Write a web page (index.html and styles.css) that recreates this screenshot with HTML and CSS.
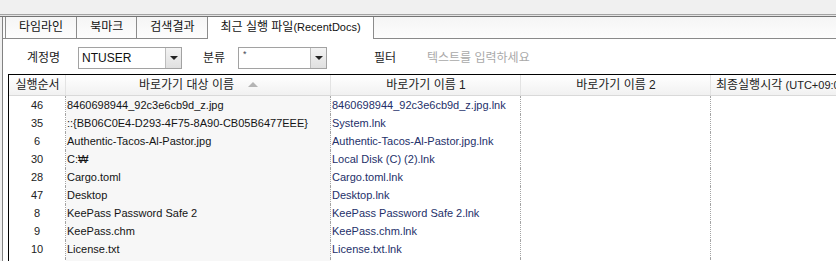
FILE: index.html
```html
<!DOCTYPE html>
<html lang="ko">
  <head>
    <meta charset="UTF-8" />
    <title>최근 실행 파일(RecentDocs)</title>
    <link rel="stylesheet" href="styles.css">
  </head>
  <body>
    <div class="topbar"></div>
    <div class="split"></div>
    <div class="panel">
      <div class="tabs">
        <div class="tab">타임라인</div>
        <div class="tab">북마크</div>
        <div class="tab">검색결과</div>
        <div class="tab active">최근 실행 파일<span class="en">(RecentDocs)</span></div>
      </div>

      <div class="filters">
        <span class="label label-account">계정명</span>
        <div class="combo combo-account">
          <span class="value">NTUSER</span>
          <span class="arrow"></span>
        </div>
        <span class="label label-kind">분류</span>
        <div class="combo combo-kind">
          <span class="value star">*</span>
          <span class="arrow"></span>
        </div>
        <span class="label label-filter">필터</span>
        <span class="placeholder">텍스트를 입력하세요</span>
      </div>

      <div class="grid">
        <div class="row head">
          <div class="cell">실행순서</div>
          <div class="cell">바로가기 대상 이름<span class="sort"></span></div>
          <div class="cell">바로가기 이름 1</div>
          <div class="cell">바로가기 이름 2</div>
          <div class="cell last">최종실행시각 <span class="en">(UTC+09:00)</span></div>
        </div>
        <div class="row">
          <div class="cell num">46</div>
          <div class="cell target">8460698944_92c3e6cb9d_z.jpg</div>
          <div class="cell link">8460698944_92c3e6cb9d_z.jpg.lnk</div>
          <div class="cell"></div>
          <div class="cell last"></div>
        </div>
        <div class="row">
          <div class="cell num">35</div>
          <div class="cell target">::{BB06C0E4-D293-4F75-8A90-CB05B6477EEE}</div>
          <div class="cell link">System.lnk</div>
          <div class="cell"></div>
          <div class="cell last"></div>
        </div>
        <div class="row">
          <div class="cell num">6</div>
          <div class="cell target">Authentic-Tacos-Al-Pastor.jpg</div>
          <div class="cell link">Authentic-Tacos-Al-Pastor.jpg.lnk</div>
          <div class="cell"></div>
          <div class="cell last"></div>
        </div>
        <div class="row">
          <div class="cell num">30</div>
          <div class="cell target">C:₩</div>
          <div class="cell link">Local Disk (C) (2).lnk</div>
          <div class="cell"></div>
          <div class="cell last"></div>
        </div>
        <div class="row">
          <div class="cell num">28</div>
          <div class="cell target">Cargo.toml</div>
          <div class="cell link">Cargo.toml.lnk</div>
          <div class="cell"></div>
          <div class="cell last"></div>
        </div>
        <div class="row">
          <div class="cell num">47</div>
          <div class="cell target">Desktop</div>
          <div class="cell link">Desktop.lnk</div>
          <div class="cell"></div>
          <div class="cell last"></div>
        </div>
        <div class="row">
          <div class="cell num">8</div>
          <div class="cell target">KeePass Password Safe 2</div>
          <div class="cell link">KeePass Password Safe 2.lnk</div>
          <div class="cell"></div>
          <div class="cell last"></div>
        </div>
        <div class="row">
          <div class="cell num">9</div>
          <div class="cell target">KeePass.chm</div>
          <div class="cell link">KeePass.chm.lnk</div>
          <div class="cell"></div>
          <div class="cell last"></div>
        </div>
        <div class="row">
          <div class="cell num">10</div>
          <div class="cell target">License.txt</div>
          <div class="cell link">License.txt.lnk</div>
          <div class="cell"></div>
          <div class="cell last"></div>
        </div>
        <div class="row">
          <div class="cell num"></div>
          <div class="cell target"></div>
          <div class="cell link"></div>
          <div class="cell"></div>
          <div class="cell last"></div>
        </div>
      </div>
    </div>
  </body>
</html>
```

FILE: styles.css
```css
html,
body {
  margin: 0;
  padding: 0;
  height: 100%;
  overflow: hidden;
}
body {
  display: flex;
  flex-direction: column;
  background: #f0f0f0;
  font-family: "Liberation Sans", "Noto Sans CJK KR", sans-serif;
  font-size: 11px;
  color: #1a1a1a;
}
.topbar {
  height: 14px;
  flex-shrink: 0;
  background: #f0f0f0;
}
.split {
  height: 1px;
  flex-shrink: 0;
  background: #e4e4e4;
  border-top: 1px solid #a3a3a3;
  border-bottom: 1px solid #747474;
}
.panel {
  flex: 1;
  display: flex;
  flex-direction: column;
  min-height: 0;
  margin-left: 2px;
  border-left: 1px solid #828282;
  background: #fff;
}
.en {
  font-size: 11px;
}

/* tabs */
.tabs {
  display: flex;
  flex-shrink: 0;
  height: 21px;
  padding-left: 2px;
  background: linear-gradient(#f5f5f5, #fdfdfd);
  border-bottom: 1px solid #8a8a8a;
}
.tab {
  padding: 0 13px;
  line-height: 21px;
  font-size: 12px;
  border-left: 1px solid #8c8c8c;
  color: #111;
  white-space: nowrap;
}
.tab.active {
  height: 22px;
  margin-bottom: -1px;
  padding: 0 12px;
  background: #fff;
  border-right: 1px solid #8c8c8c;
}

/* filter row */
.filters {
  display: flex;
  flex-shrink: 0;
  align-items: center;
  height: 35px;
  padding-left: 24px;
}
.label {
  font-size: 12px;
  color: #222;
}
.label-account {
  width: 51px;
}
.label-kind {
  width: 35px;
  margin-left: 21px;
}
.label-filter {
  width: 53px;
  margin-left: 47px;
}
.placeholder {
  font-size: 12px;
  color: #a9a9a9;
}
.combo {
  display: flex;
  height: 22px;
  box-sizing: border-box;
  border: 1px solid #a2a2a2;
  background: #fff;
  margin-top: 3px;
}
.combo-account {
  width: 104px;
}
.combo-kind {
  width: 89px;
}
.combo .value {
  flex: 1;
  padding-left: 3px;
  line-height: 21px;
  font-size: 12px;
  color: #111;
}
.combo .value.star {
  font-size: 9px;
  line-height: 12px;
  padding-left: 4px;
  color: #445;
}
.combo .arrow {
  width: 15px;
  border-left: 1px solid #bdbdbd;
  background: linear-gradient(#f3f3f3, #e0e0e0);
  display: flex;
  align-items: center;
  justify-content: center;
}
.combo .arrow::after {
  content: "";
  border-left: 4px solid transparent;
  border-right: 4px solid transparent;
  border-top: 4px solid #222;
}

/* list */
.grid {
  flex: 1;
  min-height: 0;
  margin-left: 5px;
  border-left: 1px solid #000;
  border-top: 1px solid #000;
  overflow: hidden;
}
.row {
  display: grid;
  grid-template-columns: 57px 265px 190px 190px 300px;
  height: 18px;
}
.cell {
  box-sizing: border-box;
  border-right: 1px dotted #a4a4a4;
  line-height: 18px;
  padding-left: 1px;
  white-space: nowrap;
  overflow: hidden;
}
.head {
  height: 21px;
  background: linear-gradient(#ffffff, #f1f1f1);
  border-bottom: 1px solid #d9d9d9;
  box-sizing: border-box;
}
.head .cell {
  border-right: 1px solid #e3e3e3;
  line-height: 20px;
  font-size: 12px;
  text-align: center;
  color: #222;
}
.head .cell.last {
  text-align: left;
  padding-left: 5px;
}
.sort {
  display: inline-block;
  margin-left: 14px;
  vertical-align: 2px;
  border-left: 5px solid transparent;
  border-right: 5px solid transparent;
  border-bottom: 5px solid #b4b4b4;
}
.num {
  text-align: center;
  padding-left: 0;
  color: #222;
}
.target {
  background: #f7f7f7;
  color: #141414;
}
.link {
  color: #24306a;
}
```
